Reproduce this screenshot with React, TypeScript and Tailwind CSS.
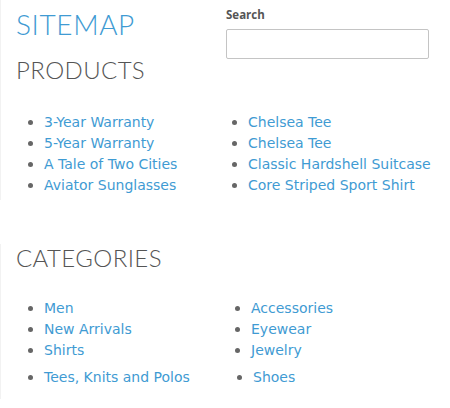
import React from "react";

const link = "text-[#3f9bd3]";

function Item({ children, className = "" }: { children: React.ReactNode; className?: string }) {
  return (
    <li className={`flex items-center h-[21px] ${className}`}>
      <span className="w-[5px] h-[5px] rounded-full bg-[#666] shrink-0" />
      <a className={`${link} ml-[11px] whitespace-nowrap`}>{children}</a>
    </li>
  );
}

export default function App() {
  return (
    <div className="w-[450px] h-[408px] bg-white overflow-hidden" style={{ fontFamily: "'DejaVu Sans', Verdana, sans-serif" }}>
      <div className="border-l border-[#f2f2f2] h-[200px]">
        <div className="flex">
          <div className="w-[210px] pl-[15px]" style={{ fontFamily: "Lato, 'Open Sans', sans-serif" }}>
            <h1 className="text-[28px] font-light leading-[32px] mt-[8px] text-[#3f9bd3] tracking-[0.6px]">SITEMAP</h1>
            <h2 className="text-[24px] font-light leading-[28px] mt-[16px] text-[#555] tracking-[0.4px]">PRODUCTS</h2>
          </div>
          <div className="pl-[15px] pt-[8px]">
            <div className="text-[11.5px] font-bold text-[#555] leading-[14px]" style={{ fontFamily: "'Open Sans', Lato, sans-serif" }}>Search</div>
            <div className="mt-[7px] w-[203px] h-[30px] border border-[#c4c4c4] rounded-[2px]" />
          </div>
        </div>
        <div className="flex text-[14px] mt-[28px] pl-[27px]">
          <ul className="w-[204px]">
            <Item>3-Year Warranty</Item>
            <Item>5-Year Warranty</Item>
            <Item>A Tale of Two Cities</Item>
            <Item>Aviator Sunglasses</Item>
          </ul>
          <ul>
            <Item>Chelsea Tee</Item>
            <Item>Chelsea Tee</Item>
            <Item>Classic Hardshell Suitcase</Item>
            <Item>Core Striped Sport Shirt</Item>
          </ul>
        </div>
      </div>
      <div className="border-l border-[#f2f2f2] h-[155px] mt-[44px]">
        <h2 className="pl-[15px] text-[24px] font-light leading-[28px] mt-[3px] text-[#555] tracking-[0.4px]" style={{ fontFamily: "Lato, 'Open Sans', sans-serif" }}>CATEGORIES</h2>
        <div className="flex text-[14px] mt-[26px] pl-[27px]">
          <ul className="w-[207px]">
            <Item>Men</Item>
            <Item>New Arrivals</Item>
            <Item>Shirts</Item>
            <Item className="mt-[6px]">Tees, Knits and Polos</Item>
          </ul>
          <ul>
            <Item>Accessories</Item>
            <Item>Eyewear</Item>
            <Item>Jewelry</Item>
            <Item className="mt-[6px] ml-[2px]">Shoes</Item>
          </ul>
        </div>
      </div>
    </div>
  );
}
